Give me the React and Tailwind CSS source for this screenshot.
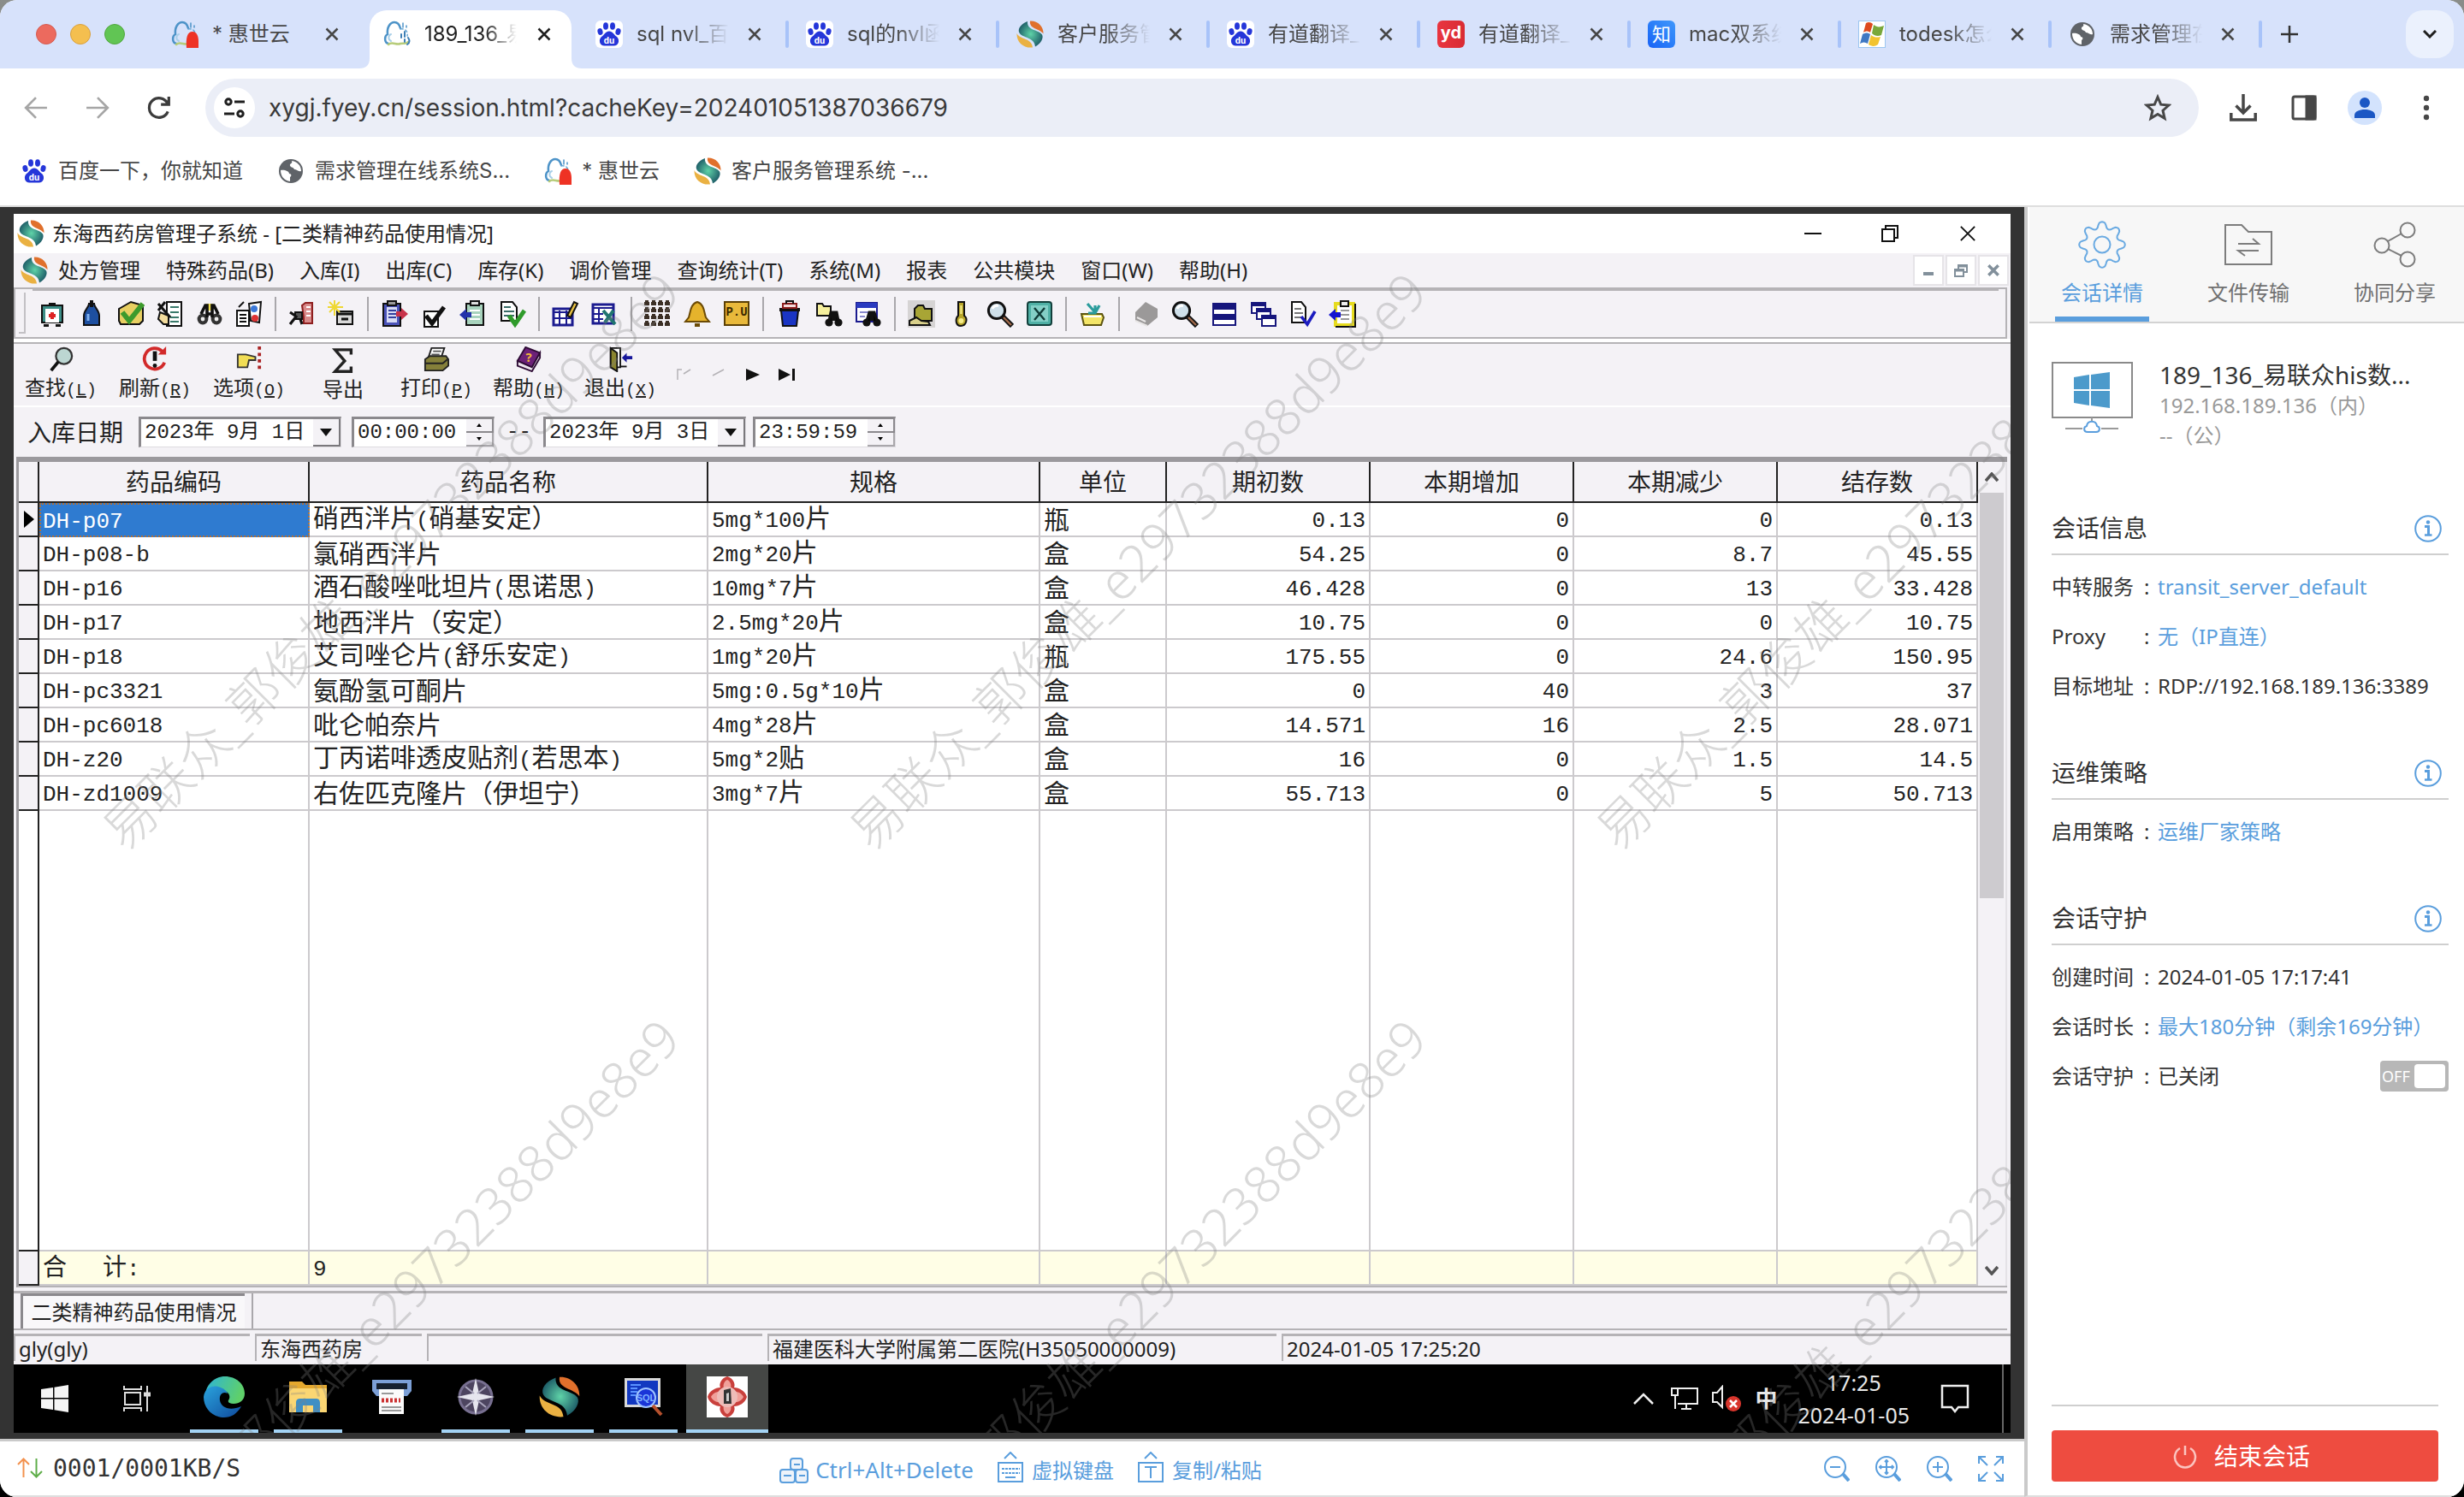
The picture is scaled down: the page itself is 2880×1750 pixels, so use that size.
import React from "react";

/* ---------- shared icon helpers ---------- */

function Swirl({ className }) {
  return (
    <svg viewBox="0 0 32 32" className={className} aria-hidden="true">
      <defs>
        <radialGradient id="swirlTeal" cx="50%" cy="50%" r="55%">
          <stop offset="0" stopColor="#5fd3a8" />
          <stop offset="1" stopColor="#1c5a66" />
        </radialGradient>
      </defs>
      <path d="M13 1C5 4 1 10 3.500 14.500C7 20.500 21 19 22 30.500C29 27 32 20 30 16.500C26 10.500 12 12 13 1Z" fill="url(#swirlTeal)" />
      <path d="M16 0.500C25 0 32 7 31.500 15.500C27 9 14.500 10 16 0.500Z" fill="#e0702c" />
      <path d="M0.500 15C4.500 23 18 20 19 31.500C8 32.500 0 25 0.500 15Z" fill="#eab142" />
    </svg>
  );
}

function Cloud({ className, dot }) {
  return (
    <svg viewBox="0 0 32 32" className={className} aria-hidden="true" fill="none" strokeLinecap="round">
      <path d="M6 27C1 26 1 18 5 16C4 8 8 2 13 2C17 2 19 5 20 9" stroke="#4d93c8" strokeWidth="2.500" />
      <path d="M9 24C5 22 6 17 9 16" stroke="#a8cfe8" strokeWidth="2" />
      <path d="M6 28C10 24 15 29 20 27C24 26 27 28 29 25" stroke="#b7cc7a" strokeWidth="2.500" />
      <path d="M20 10C26 9 29 13 28 18" stroke="#6aa9d6" strokeWidth="1.500" strokeDasharray="3 3" />
      <path d="M23 3v5M27 6v2" stroke="#4d93c8" strokeWidth="1.500" />
      {dot ? <path d="M18 32C17 20 19 13 25 13C31 13 32 20 32 25V32Z" fill="#ee3224" /> : <path d="M21 16v4M25 13v6M25 22v3M29 20C31 23 31 26 28 28" stroke="#3d7fb5" strokeWidth="2" />}
    </svg>
  );
}

function Baidu({ className }) {
  return (
    <svg viewBox="0 0 32 32" className={className} aria-hidden="true" fill="#2536d9">
      <ellipse cx="5.500" cy="13" rx="3" ry="4" transform="rotate(-15 5.500 13)" />
      <ellipse cx="12" cy="6.500" rx="3" ry="4.300" />
      <ellipse cx="20" cy="6.500" rx="3" ry="4.300" />
      <ellipse cx="26.500" cy="13" rx="3" ry="4" transform="rotate(15 26.500 13)" />
      <path d="M16 12.500C20 12.500 22 17 25 19C29 23 27 29.500 21.500 29.500H10.500C5 29.500 3 23 7 19C10 17 12 12.500 16 12.500Z" />
      <text x="16" y="26.500" textAnchor="middle" fontSize="11" fontWeight="700" fontFamily="Roboto, sans-serif" fill="#fff">du</text>
    </svg>
  );
}

function Globe({ className }) {
  return (
    <svg viewBox="0 0 32 32" className={className} aria-hidden="true">
      <circle cx="16" cy="16" r="14" fill="#5f6368" />
      <path d="M17 4C24 5 28 10 28 16C24 17 23 14 20 14C19 11 14 12 15 8C16 7 18 7 17 4Z" fill="#fff" />
      <path d="M4 15C8 14 14 16 14 19C17 19 17 22 15 23V28C8 27 4 22 4 15Z" fill="#fff" />
    </svg>
  );
}

function XMark({ className, w = 2 }) {
  return (
    <svg viewBox="0 0 16 16" className={className} stroke="currentColor" strokeWidth={w} fill="none" aria-hidden="true">
      <path d="M1.500 1.500L14.500 14.500M14.500 1.500L1.500 14.500" />
    </svg>
  );
}

const boxed = "size-8 rounded-md bg-white shrink-0";
const plain = "size-8 shrink-0";

function TabIcon({ kind }) {
  if (kind === "cloudDot") return <Cloud className={plain} dot />;
  if (kind === "cloud") return <Cloud className={plain} />;
  if (kind === "baidu") return <Baidu className={boxed} />;
  if (kind === "swirl") return <Swirl className={plain} />;
  if (kind === "globe") return <Globe className={plain} />;
  if (kind === "yd")
    return (
      <span className="flex size-8 shrink-0 items-center justify-center rounded-md bg-gradient-to-r from-[#e93540] to-[#d92b33] pb-1 text-[20px] leading-none font-bold text-white">yd</span>
    );
  if (kind === "zhi")
    return (
      <span className="flex size-8 shrink-0 items-center justify-center rounded-md bg-gradient-to-tr from-[#1a62f5] to-[#3f97fb] text-[22px] leading-none text-white">知</span>
    );
  return (
    <svg viewBox="0 0 32 32" className={plain} aria-hidden="true">
      <rect x="0.500" y="0.500" width="31" height="31" fill="#fff" stroke="#9cc6f0" />
      <path d="M9 3C12 1 15 2 17 4L14 14C11 12 9 12 6 14Z" fill="#dd4a1e" />
      <path d="M18 5C22 8 25 8 30 6L27 17C23 19 19 18 16 15Z" fill="#79a83a" />
      <path d="M5 16C9 14 11 14 14 16L11 27C8 25 5 25 2 27Z" fill="#3f78c3" />
      <path d="M15 17C19 20 22 20 26 19L23 28C19 31 15 30 12 28Z" fill="#f2c330" />
    </svg>
  );
}

/* ---------- browser chrome ---------- */

const tabs = [
  { icon: "baidu", text: "sql nvl_百度" },
  { icon: "baidu", text: "sql的nvl函数" },
  { icon: "swirl", text: "客户服务管理" },
  { icon: "baidu", text: "有道翻译_百" },
  { icon: "yd", text: "有道翻译_文" },
  { icon: "zhi", text: "mac双系统" },
  { icon: "win", text: "todesk怎么" },
  { icon: "globe", text: "需求管理在线" },
];

function TabBar() {
  return (
    <header className="flex h-20 shrink-0 items-end bg-[#d7e2fb] text-2xl text-[#474747]">
      <div className="flex h-full w-[184px] shrink-0 items-center gap-4 pl-[42px]">
        <button aria-label="关闭窗口" className="size-6 rounded-full border border-[#d55b50] bg-[#ec6a5e]" />
        <button aria-label="最小化" className="size-6 rounded-full border border-[#d9a03e] bg-[#f4bf4f]" />
        <button aria-label="缩放" className="size-6 rounded-full border border-[#51a73e] bg-[#61c554]" />
      </div>
      <div className="flex h-[68px] w-[236px] items-center gap-4 pb-3 pl-4">
        <TabIcon kind="cloudDot" />
        <span className="flex-1 truncate">* 惠世云</span>
        <button aria-label="关闭标签页" className="mr-6 shrink-0"><XMark className="size-4" w={2.5} /></button>
      </div>
      <svg viewBox="0 0 12 12" className="size-3 shrink-0" fill="#fff" aria-hidden="true"><path d="M12 0V12H0C8 12 12 8 12 0Z" /></svg>
      <div className="flex h-[68px] w-[236px] items-center gap-4 rounded-t-[20px] bg-white pb-3 pl-4 text-[#1f1f1f]">
        <TabIcon kind="cloud" />
        <span className="w-[108px] overflow-hidden whitespace-nowrap [mask-image:linear-gradient(to_right,black_65%,transparent)]">189_136_易</span>
        <button aria-label="关闭标签页" className="ml-2 shrink-0"><XMark className="size-4" w={2.5} /></button>
      </div>
      <svg viewBox="0 0 12 12" className="size-3 shrink-0" fill="#fff" aria-hidden="true"><path d="M0 0V12H12C4 12 0 8 0 0Z" /></svg>
      {tabs.map((t, i) => (
        <div key={i} className="flex h-[68px] w-[246px] min-w-0 items-center gap-4 pb-3 pl-4">
          <TabIcon kind={t.icon} />
          <span className="min-w-0 flex-1 overflow-hidden whitespace-nowrap [mask-image:linear-gradient(to_right,black_50%,transparent_95%)]">{t.text}</span>
          <button aria-label="关闭标签页" className="shrink-0"><XMark className="size-4" w={2.5} /></button>
          <span className="mr-1 ml-3 h-8 w-1 shrink-0 rounded-sm bg-[#a8c3f9]" />
        </div>
      ))}
      <button aria-label="新标签页" className="ml-1 flex h-[68px] w-12 shrink-0 items-center justify-center pb-3 text-[#333]">
        <svg viewBox="0 0 20 20" className="size-5" stroke="currentColor" strokeWidth="2.500"><path d="M10 0V20M0 10H20" /></svg>
      </button>
      <div className="flex-1" />
      <button aria-label="搜索标签页" className="mr-3 mb-3 flex size-14 shrink-0 items-center justify-center rounded-[20px] bg-[#ebf1fd]">
        <svg viewBox="0 0 16 10" className="h-[10px] w-4" fill="none" stroke="#1f1f1f" strokeWidth="3"><path d="M1 1L8 8L15 1" /></svg>
      </button>
    </header>
  );
}

function AddressBar() {
  return (
    <nav className="flex shrink-0 items-center bg-white pt-3 pr-10 pl-6 text-[#474747]">
      <button aria-label="后退" className="mr-9 p-1 text-[#a6a6a6]">
        <svg viewBox="0 0 26 26" className="size-7" fill="none" stroke="currentColor" strokeWidth="2.500"><path d="M25 13H2M13 2L2 13L13 24" /></svg>
      </button>
      <button aria-label="前进" className="mr-9 p-1 text-[#a6a6a6]">
        <svg viewBox="0 0 26 26" className="size-7" fill="none" stroke="currentColor" strokeWidth="2.500"><path d="M1 13H24M13 2L24 13L13 24" /></svg>
      </button>
      <button aria-label="重新加载" className="mr-9 p-1 text-[#3c3c3c]">
        <svg viewBox="0 0 26 26" className="size-7" fill="none" stroke="currentColor" strokeWidth="3"><path d="M22.500 17A10.500 10.500 0 1 1 22 8M23.500 1V9.500H15" /></svg>
      </button>
      <div className="flex h-[68px] flex-1 items-center rounded-full bg-[#ebeef7] pr-8 pl-[10px]">
        <button aria-label="网站信息" className="flex size-12 items-center justify-center rounded-full bg-white">
          <svg viewBox="0 0 24 24" className="size-6" fill="none" stroke="#1f1f1f" strokeWidth="3"><circle cx="5" cy="5" r="3.200" /><path d="M12 5H24M0 19H12" /><circle cx="19" cy="19" r="3.200" /></svg>
        </button>
        <input aria-label="地址" defaultValue="xygj.fyey.cn/session.html?cacheKey=202401051387036679" className="ml-4 min-w-0 flex-1 bg-transparent text-[28px] text-[#3a3a3a] outline-none" />
        <button aria-label="收藏">
          <svg viewBox="0 0 32 32" className="size-8" fill="none" stroke="#474747" strokeWidth="3"><path d="M16 3.500L19.700 12.200L29 13L22 19.200L24.100 28.400L16 23.500L7.900 28.400L10 19.200L3 13L12.300 12.200Z" /></svg>
        </button>
      </div>
      <div className="flex items-center pl-9">
        <button aria-label="下载" className="mr-10">
          <svg viewBox="0 0 32 32" className="size-8" fill="none" stroke="#474747" strokeWidth="3.500"><path d="M16 0V21M7.500 13.500L16 22L24.500 13.500M1.800 22V30H30.200V22" /></svg>
        </button>
        <button aria-label="侧边栏" className="mr-9">
          <svg viewBox="0 0 30 30" className="size-[30px]" fill="none" stroke="#474747" strokeWidth="3"><rect x="2" y="2" width="26" height="26" rx="2" /><path d="M18 2H28V28H18Z" fill="#474747" /></svg>
        </button>
        <button aria-label="个人资料" className="mr-12 flex size-10 items-center justify-center rounded-full bg-[#d3e3fd]">
          <svg viewBox="0 0 24 24" className="size-6" fill="#1b57c4"><circle cx="12" cy="6" r="6" /><path d="M0 24V21C0 16 6 14 12 14S24 16 24 21V24Z" /></svg>
        </button>
        <button aria-label="更多">
          <svg viewBox="0 0 8 30" className="h-[30px] w-2" fill="#474747"><circle cx="4" cy="4" r="3.200" /><circle cx="4" cy="15" r="3.200" /><circle cx="4" cy="26" r="3.200" /></svg>
        </button>
      </div>
    </nav>
  );
}

function Bookmarks() {
  return (
    <div className="flex h-[82px] shrink-0 items-center gap-10 border-b-2 border-[#dedede] bg-white pl-6 text-2xl text-[#474747]">
      <a href="#baidu" className="flex items-center gap-3"><Baidu className="size-8" />百度一下，你就知道</a>
      <a href="#req" className="flex items-center gap-3"><Globe className="size-8" />需求管理在线系统S...</a>
      <a href="#hsy" className="flex items-center gap-3"><Cloud className="size-8" dot />* 惠世云</a>
      <a href="#crm" className="flex items-center gap-3"><Swirl className="size-8" />客户服务管理系统 -...</a>
    </div>
  );
}

/* ---------- toolbar icons, drawn on a 16 x 16 grid ---------- */

const K = "#111";
const glyphs = {
  kit: <><rect x="2" y="3" width="12" height="10" fill="#3c8d86" stroke={K} /><rect x="4" y="5" width="8" height="8" fill="#fff" /><path d="M6 1.500H10V3H6ZM3 14H6V15.500H3ZM10 14H13V15.500H10Z" fill={K} /><path d="M8 7V11M6 9H10" stroke="#d22" strokeWidth="2" /></>,
  bottle: <><path d="M6.500 2C6.500 4 3.500 6 3.500 9V14.500H12.500V9C12.500 6 9.500 4 9.500 2Z" fill="#1d4fa0" stroke={K} /><path d="M6 8V12" stroke="#7fb0ee" strokeWidth="1.500" /><path d="M8 0V4" stroke={K} strokeWidth="2" /></>,
  mailcheck: <><path d="M1 5L8 1L15 3V12L13 14H2L1 12Z" fill="#e8cf62" stroke={K} /><path d="M3 7L7 12L15 2" fill="none" stroke="#3d9a2c" strokeWidth="3" /></>,
  handdoc: <><path d="M6 1H14.500V15H6Z" fill="#fff" stroke={K} /><path d="M8 4H13M8 7H13M8 10H13M8 12.500H13" stroke="#3a7a6b" /><path d="M2 7L7 9V14H4L1 11Z" fill="#f3dc9d" stroke={K} /><path d="M1 2L8 10M5 1L1 6" stroke={K} strokeWidth="1.500" /></>,
  binoc: <><path d="M6 2H10V6H6Z" fill="#f2e250" /><circle cx="4" cy="11" r="3.200" fill="#333" /><circle cx="12" cy="11" r="3.200" fill="#333" /><path d="M3 8L5.500 3H6.500V10M13 8L10.500 3H9.500V10M6 8H10" stroke={K} strokeWidth="1.800" fill="none" /><circle cx="4" cy="11" r="1.200" fill="#eee" /><circle cx="12" cy="11" r="1.200" fill="#eee" /></>,
  docs: <><path d="M1 6H8V15H1Z" fill="#fff" stroke={K} /><path d="M2.500 8.500H6.500M2.500 10.500H6.500M2.500 12.500H6.500" stroke={K} /><path d="M8 2L15 1L14 13L9 12Z" fill="#fff" stroke={K} /><circle cx="11" cy="5" r="2" fill="#3b78d8" /><circle cx="11.500" cy="10.500" r="2" fill="#d33" /><path d="M2 4L5 1" stroke={K} /></>,
  redman: <><path d="M8 3L10 1.500H14V13.500H9V10Z" fill="#d98a8a" stroke="#8e1f1f" /><path d="M10.500 4H13M10.500 6.500H13M10.500 9H13" stroke="#fff" /><path d="M4 7H8V11H4Z" fill="#555" stroke={K} /><path d="M1 14L5 9M1 7L4 9M7 11L8 14" stroke={K} strokeWidth="1.600" fill="none" /></>,
  flash: <><rect x="5.500" y="6.500" width="9" height="7.500" fill="#d9d9d9" stroke={K} /><path d="M5.500 8H14.500M8 11H12" stroke={K} strokeWidth="1.500" /><path d="M4 0V9M0 4H9M1 1L7 7M7 1L1 7" stroke="#efd832" /></>,
  clipout: <><rect x="1.500" y="2" width="10" height="13" fill="#4a53b8" stroke={K} /><rect x="3.500" y="4" width="6" height="9" fill="#d8dcf5" /><path d="M4.500 6H9M4.500 8H9M4.500 10H9" stroke="#333f9e" /><rect x="4" y="0.500" width="5" height="2.500" fill="#999" stroke={K} /><path d="M9 6.500H12V4.500L16 8L12 11.500V9.500H9Z" fill="#c8324a" /></>,
  tick: <><rect x="2.500" y="6.500" width="8" height="9" fill="#fff" stroke={K} /><path d="M3.500 9L7 13.500L14 4" fill="none" stroke={K} strokeWidth="2.500" /></>,
  clipin: <><rect x="4" y="2" width="10" height="12.500" fill="#a8d3bd" stroke={K} /><path d="M6 6H12M6 8.500H12M6 11H12" stroke="#fff" /><rect x="6.500" y="0.500" width="5" height="2.500" fill="#ddd" stroke={K} /><path d="M7 7H4V5L0 8.500L4 12V10H7Z" fill="#2233aa" /></>,
  doccheck: <><path d="M1.500 1H8L10.500 4V12H1.500Z" fill="#fff" stroke={K} /><path d="M3 4H7M3 6.500H9M3 9H9" stroke="#3a6d68" /><path d="M6 9L9.500 14L15 6" fill="none" stroke="#2f9b2b" strokeWidth="2.500" /></>,
  tablepen: <><rect x="1" y="5" width="11" height="9.500" fill="#fff" stroke="#1b1b8f" strokeWidth="1.500" /><path d="M1 7H12M1 10.500H12M4.500 6V14M8.500 6V14" stroke="#1b1b8f" /><path d="M9 9L13 1L15 2L11 10Z" fill="#e9c243" stroke={K} /></>,
  tablex: <><rect x="1" y="2.500" width="12" height="11" fill="#fff" stroke="#1b1b8f" strokeWidth="1.500" /><path d="M1 4.500H13M4.500 4V13M1 8H7M1 11H7" stroke="#1b1b8f" /><path d="M7 6L14 14M13 6L8 13" stroke="#20756f" strokeWidth="2" /></>,
  grid: <path d="M1.500 0V16M5.500 0V16M9.500 0V16M13.500 0V16M0 2H16M0 6H16M0 10H16M0 14H16" stroke="#3b2f25" strokeWidth="2" fill="none" strokeDasharray="3 1" />,
  bell: <><path d="M8 1C12 2 12 7 13 10L15 12.500H1L3 10C4 7 4 2 8 1Z" fill="#e5b32c" stroke="#6b4a05" /><path d="M6.500 13.500H9.500V15.500H6.500Z" fill="#6b4a05" /></>,
  pu: <><rect x="1" y="1" width="14" height="13.500" fill="#e9b93b" stroke="#5a3f05" /><text x="8" y="9" textAnchor="middle" fontSize="7" fontWeight="700" fontFamily="Liberation Mono" fill="#3c2a00">P.U</text></>,
  jar: <><path d="M3 6H13L12 15H4Z" fill="#1a35c4" stroke={K} /><rect x="2" y="4.500" width="12" height="2" fill={K} /><path d="M4 4.500V2H12V4.500Z" fill="#f3dada" stroke="#8b1b1b" /><path d="M6 2V0.500H10V2" stroke={K} fill="none" /></>,
  foldbin: <><path d="M1 2H4L5 3.500H9V9H1Z" fill="#f5ef9c" stroke={K} /><circle cx="8" cy="13" r="2.300" fill={K} /><circle cx="13.500" cy="13" r="2.300" fill={K} /><path d="M8 12L9 7H10V12M13.500 12L12.500 7H11.500V12" stroke={K} strokeWidth="1.500" /></>,
  tabbin: <><rect x="1" y="1.500" width="12" height="11" fill="#fff" stroke="#1b1b8f" /><rect x="1" y="1.500" width="12" height="3" fill="#2a3bc0" /><path d="M3 7H8M3 9.500H6" stroke="#88c" /><circle cx="7" cy="13" r="2.300" fill={K} /><circle cx="13" cy="13" r="2.300" fill={K} /><path d="M7 12L8.500 7H9.500V12M13 12L11.500 7H10.500V12" stroke={K} strokeWidth="1.500" /></>,
  foldhand: <><rect x="0" y="0" width="16" height="16" fill="#d6d4d4" /><path d="M4 5L6 3H9L10 5H14V12H4Z" fill="#a8a535" stroke={K} /><path d="M1 12L5 10L8 12L12 12.500L13 14.500H1Z" fill="#d8cf8a" stroke={K} /></>,
  thermo: <><path d="M6.500 1H10V9C12.500 11 11 15 8 15C5 15 4.500 11 6.500 9Z" fill="#b7a52a" stroke={K} /><circle cx="8.200" cy="12" r="1.500" fill="#f5ec8a" /><path d="M8.200 3V8" stroke="#f5ec8a" /></>,
  lens: <><circle cx="6" cy="6" r="4.800" fill="#cfe0ea" stroke={K} strokeWidth="1.500" /><path d="M3.500 5C4 3.500 5.500 3 7 3.200" stroke="#fff" fill="none" strokeWidth="1.500" /><path d="M9.500 9.500L15 15" stroke={K} strokeWidth="3" /><path d="M10 10L14.500 14.500" stroke="#a0694a" strokeWidth="1.200" /></>,
  excel: <><rect x="1" y="1" width="14" height="13.500" rx="1.500" fill="#4fb0a5" stroke="#123f3b" /><rect x="3" y="3" width="10" height="9.500" fill="#83cfc6" /><path d="M5 4.500L11 11.500M11 4.500L5 11.500" stroke="#0f3c38" strokeWidth="1.200" /></>,
  openfold: <><path d="M1.500 8H13.500L14.500 10L13 14.500H3Z" fill="#f3e568" stroke="#5c5410" /><path d="M3 9.500H13" stroke="#fff" /><path d="M5 2L9 6.500M12 3L9.500 7.500M9.500 3V7.500H5.500" stroke="#2b9c9c" strokeWidth="1.600" fill="none" /></>,
  eraser: <><path d="M2 7L8 1L15 5V10L9 15L2 12Z" fill="#9b9999" /><path d="M2 12L9 15M3 10L8 12.500" stroke="#e8e6e6" /></>,
  winh: <><rect x="1.500" y="2" width="13" height="12.500" fill="#fff" stroke="#16167c" /><rect x="1.500" y="2" width="13" height="3.500" fill="#16167c" /><rect x="1.500" y="8" width="13" height="3.500" fill="#16167c" /></>,
  cascade: <><g fill="#fff" stroke="#16167c"><rect x="1" y="1.500" width="8" height="6" /><rect x="4" y="5" width="8" height="6" /><rect x="7" y="9" width="8" height="6" /></g><path d="M1 2.500H9M4 6H12M7 10H15" stroke="#16167c" strokeWidth="2" /></>,
  docv: <><path d="M1.500 1H7L9.500 4V13H1.500Z" fill="#fff" stroke={K} /><path d="M3 5H7M3 7.500H8M3 10H8" stroke="#777" /><path d="M7 9.500L10.500 14L15 6.500" fill="none" stroke="#1b1bbf" strokeWidth="1.800" /></>,
  paste: <><rect x="4" y="2" width="10.500" height="12.500" fill="#fff" stroke="#e7dc1f" strokeWidth="2" /><path d="M15.500 2V15.500H4" stroke={K} fill="none" /><path d="M7 6H12M7 8.500H12M7 11H12" stroke="#999" /><rect x="7" y="0.500" width="4.500" height="3" fill="#eee" stroke={K} /><path d="M7 7H4V5L0 8.500L4 12V10H7Z" fill="#1515d0" /></>,
};

const toolbarGroups = [
  ["kit", "bottle", "mailcheck", "handdoc", "binoc", "docs"],
  ["redman", "flash"],
  ["clipout", "tick", "clipin", "doccheck"],
  ["tablepen", "tablex"],
  ["grid", "bell", "pu"],
  ["jar", "foldbin", "tabbin"],
  ["foldhand", "thermo", "lens", "excel"],
  ["openfold"],
  ["eraser", "lens", "winh", "cascade", "docv", "paste"],
];

function IconToolbar() {
  return (
    <div className="mr-1 flex h-[60px] shrink-0 items-center border-2 border-[#b5b3b6] bg-[#f4f2f6] pl-1">
      <span className="mr-2 h-12 w-2 border-r-2 border-b-2 border-[#c3c1c5]" />
      <div className="mr-2 flex h-full flex-1 items-center border-t-2 border-[#b5b3b6]">
        {toolbarGroups.map((g, i) => (
          <React.Fragment key={i}>
            {i > 0 && <span className="mx-[7px] h-10 w-[2px] bg-[#a9a7ab]" />}
            {g.map((name) => (
              <button key={name} aria-label={name} className="flex w-[46px] justify-center">
                <svg viewBox="0 0 16 16" className="size-8">{glyphs[name]}</svg>
              </button>
            ))}
          </React.Fragment>
        ))}
      </div>
    </div>
  );
}

const actions = [
  { t: "查找", k: "L", w: "w-[110px]", icon: <><circle cx="10" cy="6" r="5" fill="#bcd6d2" stroke="#333" strokeWidth="1.200" /><path d="M6.500 9.500L2 15" stroke="#111" strokeWidth="2" /></> },
  { t: "刷新", k: "R", w: "w-[110px]", icon: <><path d="M12.500 3A6.500 6.500 0 1 0 14 10" fill="none" stroke="#d22a2a" strokeWidth="2" /><path d="M10 5H15V0Z" fill="#d22a2a" /><path d="M8 3V9" stroke="#111" strokeWidth="2.500" /><circle cx="8" cy="12" r="1.300" fill="#111" /></> },
  { t: "选项", k: "O", w: "w-[110px]", icon: <><path d="M1 5H6L12 6.500V8.500H8L7 13H1Z" fill="#f1dd55" stroke="#333" /><path d="M14.500 0V16" stroke="#a22" strokeWidth="2" strokeDasharray="2 2" /></> },
  { t: "导出", k: "", w: "w-[110px]", icon: <path d="M13 4V1H3L9 8L3 14.500H13V11.500" fill="none" stroke="#222" strokeWidth="1.800" /> },
  { t: "打印", k: "P", w: "w-[108px]", icon: <><path d="M5 1H13L11 7H3Z" fill="#fff" stroke="#222" /><path d="M6 3H11M5 5H10" stroke="#555" /><path d="M1 8L4 6H14L15.500 8V12L12 15H1Z" fill="#85803a" stroke="#222" /><path d="M1 10.500H12L15 8" stroke="#222" fill="none" /></> },
  { t: "帮助", k: "H", w: "w-[108px]", icon: <><path d="M6 0.500L15 4L10 13L1 9Z" fill="#6b2177" stroke="#2d0b34" /><path d="M1 9V12L10 15.500L15 7V4L10 13Z" fill="#efe6ef" stroke="#2d0b34" /><text x="8" y="9.500" textAnchor="middle" fontSize="8" fontWeight="700" fill="#f0b73a">?</text></> },
  { t: "退出", k: "X", w: "w-[106px]", icon: <><path d="M2 1H8V13H2Z" fill="#fff" stroke="#111" /><path d="M2 1L6 4V15.500L2 13Z" fill="#8a852f" stroke="#111" /><path d="M8 12.500H12" stroke="#111" /><path d="M15.500 6H12V4L9 7L12 10V8H15.500Z" fill="#16169a" /></> },
];

const mono = "font-['Liberation_Mono','Noto_Sans_CJK_SC',monospace]";

function ActionBar() {
  return (
    <div className="flex h-[76px] shrink-0 items-center border-t-2 border-b-2 border-t-[#b5b3b6] border-b-white bg-[#f4f2f6]">
      {actions.map((a) => (
        <button key={a.t} className={`flex shrink-0 flex-col items-center ${a.w}`}>
          <svg viewBox="0 0 16 16" className="mb-1 size-[30px]">{a.icon}</svg>
          <span className="text-2xl leading-7 whitespace-nowrap">
            {a.t}
            {a.k && <span className={`text-xl leading-7 ${mono}`}>(<u>{a.k}</u>)</span>}
          </span>
        </button>
      ))}
      <div className="ml-3 flex items-center gap-5">
        <button aria-label="第一条"><svg viewBox="0 0 20 14" className="h-4 w-5" fill="none" stroke="#b4b2b6" strokeWidth="1.500"><path d="M2 13V1H7M9 6L17 1" /></svg></button>
        <button aria-label="上一条"><svg viewBox="0 0 20 14" className="h-4 w-5" fill="none" stroke="#b4b2b6" strokeWidth="1.500"><path d="M3 8L16 1" /></svg></button>
        <button aria-label="下一条"><svg viewBox="0 0 20 14" className="h-4 w-5" fill="#111"><path d="M2 0L18 7L2 14Z" /></svg></button>
        <button aria-label="最后一条"><svg viewBox="0 0 20 14" className="h-4 w-5" fill="#111"><path d="M0 0L14 7L0 14ZM16 0H19V14H16Z" /></svg></button>
      </div>
    </div>
  );
}

const sunken = "flex h-9 items-stretch border-t-[3px] border-l-[3px] border-t-[#8b898d] border-l-[#8b898d] border-r border-b border-[#dddbe0] bg-white";

function DateBox({ label, value }) {
  return (
    <div className={`${sunken} w-[237px]`}>
      <input aria-label={label} defaultValue={value} className={`w-0 flex-1 bg-transparent pl-1 text-2xl leading-7 ${mono}`} />
      <button aria-label={`选择${label}`} className="flex w-8 items-center justify-center border-r-2 border-b-2 border-[#7a787c] bg-[#f4f2f6]">
        <svg viewBox="0 0 14 9" className="h-[9px] w-[14px]"><path d="M0 0H14L7 9Z" fill="#111" /></svg>
      </button>
    </div>
  );
}

function TimeBox({ label, value }) {
  return (
    <div className={`${sunken} w-[167px]`}>
      <input aria-label={label} defaultValue={value} className={`w-0 flex-1 bg-transparent pl-1 text-2xl leading-7 ${mono}`} />
      <div className="flex w-8 flex-col">
        <button aria-label={`${label}增加`} className="flex flex-1 items-center justify-center border-r-2 border-b-2 border-[#8b898d] bg-[#f4f2f6]"><svg viewBox="0 0 6 4" className="h-1 w-[6px]"><path d="M3 0L6 4H0Z" /></svg></button>
        <button aria-label={`${label}减少`} className="flex flex-1 items-center justify-center border-r-2 border-b-2 border-[#a9a7ab] bg-[#f4f2f6]"><svg viewBox="0 0 6 4" className="h-1 w-[6px]"><path d="M3 4L6 0H0Z" /></svg></button>
      </div>
    </div>
  );
}

/* ---------- data table ---------- */

/* Sets half-width runs in the monospaced face so that they take half of a full-width cell. */
function Mixed({ text }) {
  return text.split(/([\x20-\x7e]+)/).map((part, i) =>
    i % 2 ? <span key={i} className={`text-[26px] leading-8 ${mono}`}>{part}</span> : <React.Fragment key={i}>{part}</React.Fragment>
  );
}

const columns = [
  ["药品编码", "w-[316px]"],
  ["药品名称", ""],
  ["规格", "w-[388px]"],
  ["单位", "w-[148px]"],
  ["期初数", "w-[238px]"],
  ["本期增加", "w-[238px]"],
  ["本期减少", "w-[238px]"],
  ["结存数", "w-[234px]"],
];

const rows = [
  ["DH-p07", "硝西泮片(硝基安定）", "5mg*100片", "瓶", "0.13", "0", "0", "0.13"],
  ["DH-p08-b", "氯硝西泮片", "2mg*20片", "盒", "54.25", "0", "8.7", "45.55"],
  ["DH-p16", "酒石酸唑吡坦片(思诺思)", "10mg*7片", "盒", "46.428", "0", "13", "33.428"],
  ["DH-p17", "地西泮片（安定）", "2.5mg*20片", "盒", "10.75", "0", "0", "10.75"],
  ["DH-p18", "艾司唑仑片(舒乐安定)", "1mg*20片", "瓶", "175.55", "0", "24.6", "150.95"],
  ["DH-pc3321", "氨酚氢可酮片", "5mg:0.5g*10片", "盒", "0", "40", "3", "37"],
  ["DH-pc6018", "吡仑帕奈片", "4mg*28片", "盒", "14.571", "16", "2.5", "28.071"],
  ["DH-z20", "丁丙诺啡透皮贴剂(若思本)", "5mg*2贴", "盒", "16", "0", "1.5", "14.5"],
  ["DH-zd1009", "右佐匹克隆片（伊坦宁）", "3mg*7片", "盒", "55.713", "0", "5", "50.713"],
];

const gutter = "border-r-2 border-b-2 border-[#222] bg-[#f4f2f6] p-0";
const cell = "overflow-hidden border-r-2 border-b-2 border-[#cccacd] p-0 whitespace-nowrap";

function DrugTable() {
  return (
    <div className="mr-1 ml-[3px] flex min-h-0 flex-1 border-t-[6px] border-b-2 border-l-[3px] border-t-[#9b999d] border-b-[#b5b3b6] border-l-[#9b999d] bg-white">
      <table className="h-full min-w-0 flex-1 table-fixed border-separate border-spacing-0 text-[30px] leading-8 text-[#222]">
        <thead>
          <tr className="h-12">
            <th className={`${gutter} w-6`} />
            {columns.map(([name, w]) => (
              <th key={name} className={`${w} border-r-2 border-b-2 border-[#222] bg-[#f4f2f6] p-0 text-[28px] font-normal`}>{name}</th>
            ))}
          </tr>
        </thead>
        <tbody>
          {rows.map((r, ri) => (
            <tr key={r[0]} className="h-10">
              <td className={gutter}>{ri === 0 && <svg viewBox="0 0 12 20" className="ml-[6px] h-5 w-3"><path d="M0 0L12 10L0 20Z" fill="#000" /></svg>}</td>
              {r.map((c, ci) => (
                <td
                  key={ci}
                  className={
                    ri === 0 && ci === 0
                      ? "border-2 border-dotted border-[#b0713a] bg-[#2f7bd0] p-0 pl-[2px] text-white"
                      : ci > 3
                        ? `${cell} pr-1 text-right`
                        : `${cell} pl-1`
                  }
                >
                  <Mixed text={c} />
                </td>
              ))}
            </tr>
          ))}
          <tr>
            <td className="border-r-2 border-b-2 border-[#222] p-0" />
            {columns.map(([name]) => <td key={name} className={cell} />)}
          </tr>
        </tbody>
        <tfoot>
          <tr className="h-10">
            <td className={gutter} />
            <td className={`${cell} bg-[#fffee6] pl-1 text-[28px]`}>合&emsp;&ensp;<Mixed text="计:" /></td>
            <td className={`${cell} bg-[#fffee6] pl-1`}><Mixed text="9" /></td>
            {columns.slice(2).map(([name]) => <td key={name} className={`${cell} bg-[#fffee6]`} />)}
          </tr>
        </tfoot>
      </table>
      <div className="flex w-[34px] shrink-0 flex-col items-center border-r-2 border-[#e4e2e6] bg-[#f4f2f6]">
        <svg viewBox="0 0 16 12" className="my-3 h-3 w-4" fill="none" stroke="#555" strokeWidth="3.500"><path d="M1 10L8 2L15 10" /></svg>
        <div className="h-[474px] w-7 bg-[#cdcbcf]" />
        <div className="flex-1" />
        <svg viewBox="0 0 16 12" className="my-3 h-3 w-4" fill="none" stroke="#555" strokeWidth="3.500"><path d="M1 2L8 10L15 2" /></svg>
      </div>
    </div>
  );
}

/* ---------- remote desktop ---------- */

const menus = ["处方管理", "特殊药品(B)", "入库(I)", "出库(C)", "库存(K)", "调价管理", "查询统计(T)", "系统(M)", "报表", "公共模块", "窗口(W)", "帮助(H)"];

const mdi = "flex h-9 w-9 items-center justify-center border-2 border-[#e6e4e8] bg-white text-[#82909b]";

function TitleAndMenu() {
  return (
    <>
      <div className="flex h-[46px] shrink-0 items-center bg-white pl-1">
        <Swirl className="size-8" />
        <h1 className="ml-[9px] flex-1">东海西药房管理子系统 - [二类精神药品使用情况]</h1>
        <button aria-label="最小化" className="flex w-[90px] justify-center"><svg viewBox="0 0 20 20" className="size-5" stroke="#111" strokeWidth="2"><path d="M0 10H20" /></svg></button>
        <button aria-label="还原" className="flex w-[90px] justify-center"><svg viewBox="0 0 20 20" className="size-5" fill="none" stroke="#111" strokeWidth="2"><path d="M1 5H15V19H1ZM5 5V1H19V15H15" /></svg></button>
        <button aria-label="关闭" className="mr-1 flex w-[92px] justify-center text-[#111]"><XMark className="size-5" w={1.5} /></button>
      </div>
      <div className="flex h-10 shrink-0 items-center bg-[#f4f2f6] pr-[2px] pl-2">
        <Swirl className="size-8" />
        <div className="ml-3 flex flex-1 gap-[30px]">
          {menus.map((m) => <button key={m}>{m}</button>)}
        </div>
        <div className="flex gap-[2px]">
          <button aria-label="最小化子窗口" className={mdi}><span className="mt-2 h-1 w-3 bg-current" /></button>
          <button aria-label="还原子窗口" className={mdi}><svg viewBox="0 0 16 16" className="size-4" fill="none" stroke="currentColor" strokeWidth="2"><path d="M1 7H11V15H1ZM5 6V2H15V10H12" /><path d="M1 8H11M5 3H15" strokeWidth="3" /></svg></button>
          <button aria-label="关闭子窗口" className={mdi}><XMark className="size-[14px]" w={4} /></button>
        </div>
      </div>
    </>
  );
}

const taskSlot = "flex h-full w-20 shrink-0 items-center justify-center border-b-4";

function Taskbar() {
  return (
    <div className="flex h-20 shrink-0 items-center bg-black text-[25px] text-[#e8e8e8]">
      <button aria-label="开始" className="flex w-24 justify-center">
        <svg viewBox="0 0 32 32" className="size-8" fill="#f5f5f5"><path d="M0 5L14 3V15H0ZM15.500 2.700L32 0V15H15.500ZM0 16.500H14V29L0 27ZM15.500 16.500H32V32L15.500 29.300Z" /></svg>
      </button>
      <button aria-label="任务视图" className="flex w-24 justify-center">
        <svg viewBox="0 0 32 32" className="size-8" fill="none" stroke="#ddd" strokeWidth="2"><path d="M1 1V5H21V1M1 31V27H21V31M2 9H20V23H2ZM28 1V31" /><path d="M24 11H32" strokeWidth="5" /></svg>
      </button>
      <div className="flex h-full items-center gap-[18px] pl-[14px]">
        <button aria-label="Edge" className={`${taskSlot} border-[#a3d3f5]`}>
          <svg viewBox="0 0 48 48" className="size-12">
            <defs>
              <linearGradient id="edgeA" x1="0" y1="0" x2="1" y2="0.300"><stop offset="0" stopColor="#2db4d8" /><stop offset="1" stopColor="#5fd06a" /></linearGradient>
              <linearGradient id="edgeB" x1="0" y1="0" x2="1" y2="1"><stop offset="0" stopColor="#2aa3dd" /><stop offset="1" stopColor="#0f4a9c" /></linearGradient>
            </defs>
            <path d="M2 20C4 8 14 0 25 0C38 0 48 9 48 20C48 28 42 32 35 32C30 32 28 30 29 28C32 24 30 17 22 17C12 17 2 24 2 20Z" fill="url(#edgeA)" />
            <path d="M0 24C1 14 10 10 17 12C24 14 27 17 28 20C22 17 18 22 19 28C20 36 30 41 44 35C39 44 32 48 24 48C10 48 0 37 0 24Z" fill="url(#edgeB)" />
          </svg>
        </button>
        <button aria-label="文件资源管理器" className={`${taskSlot} border-[#a3d3f5]`}>
          <svg viewBox="0 0 44 40" className="h-10 w-11"><path d="M0 2H15L19 6H44V38H0Z" fill="#e4a82e" /><path d="M0 10H44V38H0Z" fill="#fbd673" /><path d="M8 38V27C8 23 10 22 13 22H31C34 22 36 23 36 27V38H28V30H16V38Z" fill="#3f8fc4" /></svg>
        </button>
        <button aria-label="打印程序" className={`${taskSlot} border-transparent`}>
          <svg viewBox="0 0 48 42" className="h-[42px] w-12"><path d="M1 1H47V14L42 20H6L1 14Z" fill="#7c9fd6" /><path d="M6 5H42V12H6Z" fill="#16202e" /><path d="M9 12H38V41H9Z" fill="#fbfbfb" /><path d="M12 17H26M12 33H35M12 37H35" stroke="#999" strokeWidth="2" /><path d="M12 25H34" stroke="#c33" strokeWidth="5" strokeDasharray="3 2" /></svg>
        </button>
        <button aria-label="导航程序" className={`${taskSlot} border-[#a3d3f5]`}>
          <svg viewBox="0 0 44 44" className="size-11"><circle cx="22" cy="22" r="19" fill="#4d4560" stroke="#776f90" strokeWidth="3" /><path d="M22 0L26 18L44 22L26 26L22 44L18 26L0 22L18 18Z" fill="#e6e6ee" /><path d="M10 10L20 18M34 10L24 18M10 34L20 26M34 34L24 26" stroke="#aaa6bd" strokeWidth="2" /></svg>
        </button>
        <button aria-label="易联众" className={`${taskSlot} border-[#a3d3f5]`}><Swirl className="size-12" /></button>
        <button aria-label="SQL 工具" className={`${taskSlot} border-[#a3d3f5]`}>
          <svg viewBox="0 0 46 46" className="size-[46px]"><rect x="1" y="1" width="42" height="34" fill="#d9d9d9" /><rect x="4" y="4" width="36" height="28" fill="#1238c0" /><path d="M8 9H20M8 13H16M8 17H16M8 21H14" stroke="#5a93ff" strokeWidth="2" /><circle cx="26" cy="24" r="11" fill="#1a35d8" stroke="#9fc4ff" strokeWidth="2" /><text x="26" y="28" textAnchor="middle" fontSize="11" fontWeight="700" fontFamily="Liberation Sans" fill="#7fb2ff">SQL</text><path d="M34 33L44 44" stroke="#b5502d" strokeWidth="4" /></svg>
        </button>
      </div>
      <button aria-label="药房系统" className="ml-[10px] flex h-full w-24 items-center justify-center border-b-4 border-[#a3d3f5] bg-[#454745]">
        <svg viewBox="0 0 48 48" className="size-12">
          <rect width="48" height="48" fill="#fff" />
          <path d="M24 0C31 2 34 9 32 13C38 13 45 17 47 24C45 31 38 35 32 35C34 39 31 46 24 48C17 46 14 39 16 35C10 35 3 31 1 24C3 17 10 13 16 13C14 9 17 2 24 0Z" fill="#c9403c" />
          <path d="M24 4C28 6 29 10 28 14H20C19 10 20 6 24 4ZM24 44C28 42 29 38 28 34H20C19 38 20 42 24 44ZM5 24C7 20 11 18 14 18V30C11 30 7 28 5 24ZM43 24C41 20 37 18 34 18V30C37 30 41 28 43 24Z" fill="#f0a09a" />
          <circle cx="24" cy="24" r="12" fill="#eebcb8" />
          <path d="M20 16L28 14L29 32H20Z" fill="#333" />
          <path d="M23 20L26 19V29H23Z" fill="#ccc" />
        </svg>
      </button>
      <div className="flex-1" />
      <button aria-label="显示隐藏的图标" className="mr-5"><svg viewBox="0 0 24 14" className="h-[14px] w-6" fill="none" stroke="#eee" strokeWidth="2.500"><path d="M1 13L12 2L23 13" /></svg></button>
      <svg viewBox="0 0 32 28" className="mr-4 h-7 w-8" fill="none" stroke="#eee" strokeWidth="2"><path d="M8 2H31V20H8M1 2H8V10H1ZM5 10V26M12 26H24M18 20V26" /></svg>
      <svg viewBox="0 0 34 32" className="mr-4 h-8 w-[34px]"><path d="M1 9H6L12 2V26L6 20H1Z" fill="none" stroke="#eee" strokeWidth="2" /><circle cx="25" cy="22" r="9" fill="#d8352c" /><path d="M21 18L29 26M29 18L21 26" stroke="#fff" strokeWidth="2.500" /></svg>
      <span className="mr-6 text-[26px] font-bold">中</span>
      <div className="mr-9 text-center leading-[38px]"><div>17:25</div><div>2024-01-05</div></div>
      <svg viewBox="0 0 34 34" className="mr-[38px] size-[34px]" fill="none" stroke="#eee" strokeWidth="2.500"><path d="M2 2H32V27H21L17 32L13 27H2Z" /></svg>
      <span className="mr-2 h-full w-[2px] bg-[#666]" />
    </div>
  );
}

function Watermark() {
  return (
    <div className="pointer-events-none absolute inset-0 overflow-hidden" aria-hidden="true">
      <div className="-mt-8 ml-1 grid auto-rows-[873px] grid-cols-[873px_873px_873px]">
        {[0, 1, 2, 3, 4, 5].map((n) => (
          <div key={n} className="flex items-center justify-center">
            <span className="-rotate-45 text-[60px] font-light whitespace-nowrap text-[#808080]/30">易联众_郭俊雄_e29732388d9e8e9</span>
          </div>
        ))}
      </div>
    </div>
  );
}

const statusCell = "flex h-8 items-center border-t-[3px] border-l-2 border-[#b5b3b6] pl-1";

function RemoteDesktop() {
  return (
    <main className="min-h-0 flex-1 bg-[#333] px-4 pt-2 pb-[7px]">
      <div className="relative flex h-full flex-col overflow-hidden bg-[#f4f2f6] text-2xl leading-8 text-[#222]">
        <TitleAndMenu />
        <IconToolbar />
        <div className="h-1 shrink-0 bg-white" />
        <ActionBar />
        <div className="flex h-[58px] shrink-0 items-center pl-4">
          <span className="w-[130px] text-[28px]">入库日期</span>
          <DateBox label="开始日期" value="2023年 9月 1日" />
          <span className="w-3" />
          <TimeBox label="开始时间" value="00:00:00" />
          <span className={`w-[57px] text-center ${mono}`}>--</span>
          <DateBox label="结束日期" value="2023年 9月 3日" />
          <span className="w-2" />
          <TimeBox label="结束时间" value="23:59:59" />
        </div>
        <DrugTable />
        <div className="mt-1 mr-1 flex h-[46px] shrink-0 items-stretch border-t-[3px] border-b-2 border-[#b5b3b6]">
          <button className="ml-2 w-[262px] border-t-[3px] border-l-[3px] border-[#8b898d] bg-[#f9f8fa] text-center">二类精神药品使用情况</button>
          <span className="ml-2 border-l-2 border-[#a9a7ab]" />
        </div>
        <footer className="flex h-10 shrink-0 items-start gap-[6px] pt-1">
          <span className={`${statusCell} w-[276px]`}>gly(gly)</span>
          <span className={`${statusCell} w-[195px]`}>东海西药房</span>
          <span className={`${statusCell} w-[392px]`} />
          <span className={`${statusCell} w-[595px]`}>福建医科大学附属第二医院(H35050000009)</span>
          <span className={`${statusCell} flex-1`}>2024-01-05 17:25:20</span>
        </footer>
        <Taskbar />
        <Watermark />
      </div>
    </main>
  );
}

function SessionBar() {
  return (
    <div className="flex h-[68px] shrink-0 items-center border-t-[3px] border-b-2 border-t-[#cacaca] border-b-[#dedede] bg-white text-2xl text-[#5a9edd]">
      <div className="flex flex-1 items-center pl-5 font-['DejaVu_Sans_Mono',monospace] text-[28px] text-[#333]">
        <svg viewBox="0 0 30 24" className="mr-3 h-6 w-[30px]" fill="none" strokeWidth="2"><path d="M7.500 23V2M1 8L7.500 1.500L14 8" stroke="#f3924f" /><path d="M22.500 1V22M16 16L22.500 22.500L29 16" stroke="#5fae4a" /></svg>
        0001/0001KB/S
      </div>
      <div className="flex items-center gap-7 pt-1 pl-6">
        <button className="flex items-center gap-2 text-[26px]">
          <svg viewBox="0 0 34 30" className="h-[30px] w-[34px]" fill="#eef3fa" stroke="#5a9edd" strokeWidth="2"><rect x="13" y="1" width="14" height="13" rx="3" /><rect x="1" y="14" width="17" height="15" rx="3" /><rect x="19" y="14" width="14" height="15" rx="3" /><path d="M17 8H24M5 21H14M23 21H30" /></svg>
          Ctrl+Alt+Delete
        </button>
        <button className="flex items-center gap-[10px]">
          <svg viewBox="0 0 30 36" className="mb-2 h-9 w-[30px]" fill="none" stroke="#5a9edd" strokeWidth="2"><path d="M8 8L15 1L22 8" /><rect x="1" y="13" width="28" height="22" /><path d="M5 20H26M5 25H26" strokeDasharray="3 1" /><path d="M9 30H21" /></svg>
          虚拟键盘
        </button>
        <button className="flex items-center gap-[10px]">
          <svg viewBox="0 0 30 36" className="mb-2 h-9 w-[30px]" fill="none" stroke="#5a9edd" strokeWidth="2"><path d="M8 8L15 1L22 8" /><rect x="1" y="13" width="28" height="22" /><path d="M8 18H22M15 18V31" /></svg>
          复制/粘贴
        </button>
      </div>
      <div className="flex flex-1 items-center justify-end gap-[30px] pr-6">
        {["M7 13H19", "M13 5V21M5 13H21M11 7L13 5L15 7M11 19L13 21L15 19M7 11L5 13L7 15M19 11L21 13L19 15", "M7 13H19M13 7V19"].map((d, i) => (
          <button key={i} aria-label={["缩小", "适应窗口", "放大"][i]}>
            <svg viewBox="0 0 30 30" className="size-[30px]" fill="none" stroke="#5a9edd" strokeWidth="2"><circle cx="13" cy="13" r="12" /><path d={d} /><path d="M22 21L29 29" strokeWidth="4" /></svg>
          </button>
        ))}
        <button aria-label="全屏">
          <svg viewBox="0 0 30 30" className="size-[30px]" fill="none" stroke="#5a9edd" strokeWidth="2"><path d="M1 9V1H9M1 1L11 11M21 1H29V9M29 1L19 11M1 21V29H9M1 29L11 19M21 29H29V21M29 29L19 19" /></svg>
        </button>
      </div>
    </div>
  );
}

/* ---------- session side panel ---------- */

function gearPath() {
  const pts = [];
  const steps = 96;
  for (let i = 0; i <= steps; i++) {
    const a = (i / steps) * Math.PI * 2;
    const wave = Math.cos(a * 8);
    const r = 23 + 3.800 * Math.sign(wave) * Math.pow(Math.abs(wave), 0.600);
    pts.push(`${(28 + r * Math.cos(a)).toFixed(1)} ${(28 + r * Math.sin(a)).toFixed(1)}`);
  }
  return `M${pts.join("L")}Z`;
}

function InfoIcon() {
  return (
    <svg viewBox="0 0 32 32" className="size-8" fill="none" stroke="#5a9edd" strokeWidth="2" aria-hidden="true">
      <circle cx="16" cy="16" r="14.800" />
      <circle cx="16" cy="8.500" r="2.200" fill="#5a9edd" stroke="none" />
      <path d="M12 13.500H16.500V23" strokeWidth="3" /><path d="M12 23.500H20.500" strokeWidth="2.500" />
    </svg>
  );
}

function Section({ title, children }) {
  return (
    <section className="mb-[43px]">
      <div className="flex h-[61px] items-center border-b-2 border-[#cfcfcf]">
        <h2 className="flex-1 text-[28px] text-[#333]">{title}</h2>
        <button aria-label={`${title}说明`} className="mr-2"><InfoIcon /></button>
      </div>
      <dl className="pt-2">{children}</dl>
    </section>
  );
}

function Row({ label, link, children, extra }) {
  return (
    <div className="flex h-[58px] items-center whitespace-nowrap">
      <dt className="w-[108px]">{label}</dt>
      <dd className="flex flex-1 items-center">
        <span className="w-4">:</span>
        {link ? <a href={link} className="text-[#5a9edd]">{children}</a> : <span className="flex-1">{children}</span>}
        {extra}
      </dd>
    </div>
  );
}

function SidePanel() {
  const tab = "flex w-[110px] flex-col items-center";
  return (
    <aside className="flex w-[514px] shrink-0 flex-col border-b-2 border-l-[4px] border-b-[#dedede] border-l-[#cacaca] bg-white text-2xl text-[#333]">
      <div className="ml-[2px] flex h-[136px] shrink-0 justify-between border-b-2 border-[#d3d3d3] bg-[#f7f7f7] pt-4 pr-[26px] pl-[30px] text-[#707070]">
        <button className={`${tab} border-b-[6px] border-[#5a9edd] text-[#5a9edd]`}>
          <svg viewBox="0 0 56 56" className="size-14" fill="none" stroke="#6aaae2" strokeWidth="2"><path d={gearPath()} /><circle cx="28" cy="28" r="9.500" /></svg>
          <span className="mt-3">会话详情</span>
        </button>
        <button className={tab}>
          <svg viewBox="0 0 56 56" className="size-14" fill="none" stroke="#7d7d7d" strokeWidth="2"><path d="M1 5H20L28 13H55V51H1Z" /><path d="M16 27H40L33 21M40 35H16L24 41" /></svg>
          <span className="mt-3">文件传输</span>
        </button>
        <button className={tab}>
          <svg viewBox="0 0 56 56" className="size-14" fill="none" stroke="#7d7d7d" strokeWidth="2"><circle cx="13" cy="29" r="8.500" /><circle cx="43" cy="11" r="8.500" /><circle cx="43" cy="45" r="8.500" /><path d="M20 24L36 15M20 33L36 41" /></svg>
          <span className="mt-3">协同分享</span>
        </button>
      </div>
      <div className="flex h-[210px] shrink-0 gap-[30px] pt-[43px] pl-7">
        <svg viewBox="0 0 96 88" className="h-[88px] w-24 shrink-0" fill="none"><rect x="1" y="3" width="93" height="64" stroke="#8a8a8a" strokeWidth="2" /><path d="M26 20L44 17V34H26ZM46 17L68 14V34H46ZM26 36H44V53L26 50ZM46 36H68V56L46 53Z" fill="#4c9acb" /><path d="M47 67V72M16 80H36M58 80H78" stroke="#9a9a9a" strokeWidth="2" /><path d="M42 84C37 84 37 78 41 77C42 70 52 70 53 77C57 78 57 84 52 84Z" stroke="#5a9edd" strokeWidth="2" /></svg>
        <div className="leading-[35px] text-[#999]">
          <div className="text-[28px] text-[#333]">189_136_易联众his数...</div>
          <div>192.168.189.136（内）</div>
          <div>--（公）</div>
        </div>
      </div>
      <div className="flex-1 pr-[18px] pl-7">
        <Section title="会话信息">
          <Row label="中转服务" link="#transit">transit_server_default</Row>
          <Row label="Proxy" link="#proxy">无（IP直连）</Row>
          <Row label="目标地址">RDP://192.168.189.136:3389</Row>
        </Section>
        <Section title="运维策略">
          <Row label="启用策略" link="#policy">运维厂家策略</Row>
        </Section>
        <Section title="会话守护">
          <Row label="创建时间">2024-01-05 17:17:41</Row>
          <Row label="会话时长" link="#duration">最大180分钟（剩余169分钟）</Row>
          <Row
            label="会话守护"
            extra={
              <label className="flex h-9 w-20 items-center justify-between rounded-sm bg-[#b7b7b7] pr-1 pl-[2px] text-lg text-white">
                <input type="checkbox" role="switch" aria-label="会话守护" className="sr-only" />
                OFF
                <span className="h-7 w-9 rounded-sm bg-white" />
              </label>
            }
          >
            已关闭
          </Row>
        </Section>
      </div>
      <div className="mr-[30px] ml-7 border-t-2 border-[#cfcfcf] pt-7 pb-4">
        <button className="flex h-[60px] w-full items-center justify-center gap-5 rounded bg-[#ee4c40] pt-[2px] pr-2 text-[28px] text-white">
          <svg viewBox="0 0 28 28" className="size-7" fill="none" stroke="#fbc4bf" strokeWidth="2.500"><path d="M8 4A12 12 0 1 0 20 4M14 1V12" /></svg>
          结束会话
        </button>
      </div>
    </aside>
  );
}

export default function App() {
  return (
    <div className="h-screen bg-gradient-to-b from-[#8a8d8a] to-black">
      <div className="flex h-full flex-col overflow-hidden rounded-[20px] bg-white font-['Inter','Noto_Sans_CJK_SC',sans-serif]">
        <TabBar />
        <AddressBar />
        <Bookmarks />
        <div className="flex min-h-0 flex-1 font-['Noto_Sans','Noto_Sans_CJK_SC',sans-serif]">
          <div className="flex min-w-0 flex-1 flex-col">
            <RemoteDesktop />
            <SessionBar />
          </div>
          <SidePanel />
        </div>
      </div>
    </div>
  );
}
